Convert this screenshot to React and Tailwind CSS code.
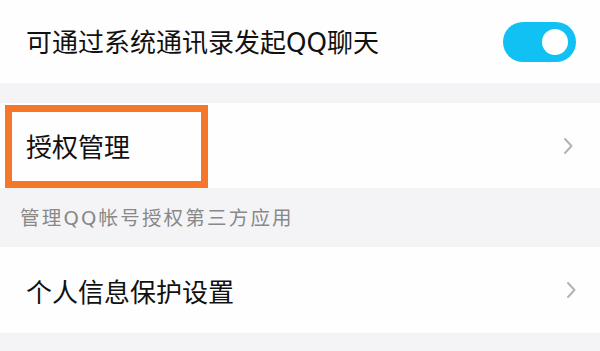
const font = { fontFamily: '"Noto Sans CJK SC", "Noto Sans", sans-serif' };

// 拉丁字母用较宽的字形，贴近参考图里的圆形 Q
const Q = ({ children }) => (
  <span style={{ fontFamily: '"DejaVu Sans", "Noto Sans", sans-serif' }}>{children}</span>
);

const Chevron = () => (
  <svg width="12" height="18" viewBox="0 0 12 18" fill="none">
    <path d="M3 2 L9.5 9 L3 16" stroke="#b3b3b3" strokeWidth="2" strokeLinecap="round" strokeLinejoin="round" />
  </svg>
);

const Row = ({ children, right, className = "" }) => (
  <div className={`relative flex items-center justify-between bg-[#fefefe] pl-[26px] ${className}`}>
    {children}
    {right}
  </div>
);

export default function App() {
  return (
    <div className="w-[600px] h-[351px] overflow-hidden bg-[#f4f4f6]" style={font}>
      {/* 通讯录开关 */}
      <Row
        className="h-[83px] pr-[24px]"
        right={
          <div className="flex h-[40px] w-[73px] items-center justify-end rounded-full bg-[#12c1f3] pr-[8px]">
            <div className="h-[26px] w-[26px] rounded-full bg-white" />
          </div>
        }
      >
        <span className="text-[26px] text-[#111]">
          可通过系统通讯录发起<Q>QQ</Q>聊天
        </span>
      </Row>

      <div className="h-[20px]" />

      {/* 授权管理 */}
      <Row className="h-[85px] pr-[26px]" right={<Chevron />}>
        <span className="text-[26px] text-[#111]">授权管理</span>
        <div className="absolute left-[5px] top-[2px] h-[83px] w-[203px] border-[7px] border-[#f6762a]" />
      </Row>

      <div className="flex h-[59px] items-center pl-[20px]">
        <span className="text-[19.5px] tracking-[2.2px] text-[#888]">
          管理<Q>QQ</Q>帐号授权第三方应用
        </span>
      </div>

      {/* 个人信息保护设置 */}
      <Row className="h-[86px] pr-[23px]" right={<Chevron />}>
        <span className="text-[26px] text-[#111]">个人信息保护设置</span>
      </Row>
    </div>
  );
}
